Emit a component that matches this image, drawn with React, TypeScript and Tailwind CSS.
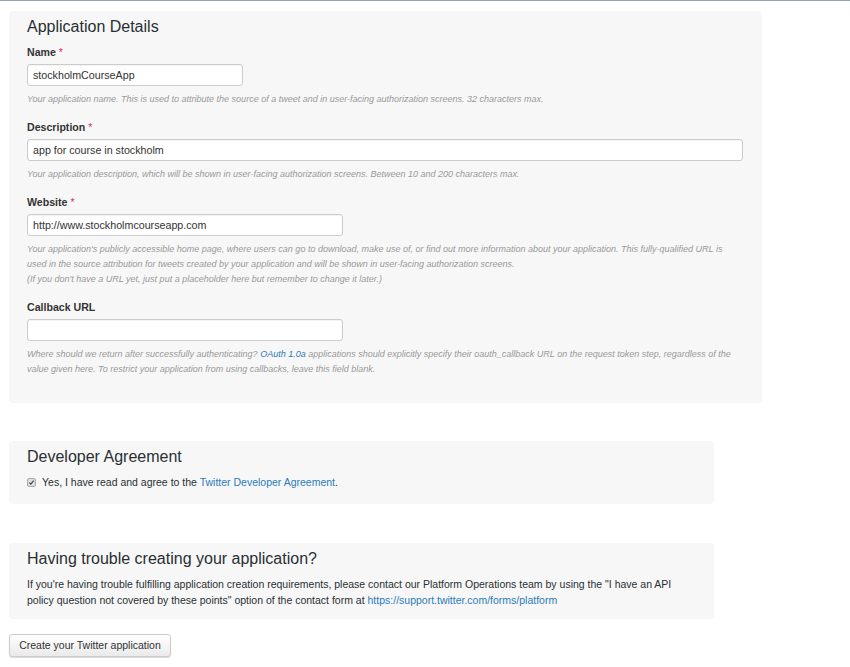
import React from 'react';

const font = { fontFamily: '"Liberation Sans", Arial, sans-serif' };

function Label({ text, required }: { text: string; required?: boolean }) {
  return (
    <div className="text-[10.6px] font-bold text-[#333] leading-[13px]">
      {text}
      {required && <span className="text-[#e0245e] font-normal"> *</span>}
    </div>
  );
}

function Field({
  label,
  required,
  value,
  width,
  children,
}: {
  label: string;
  required?: boolean;
  value: string;
  width: string;
  children: React.ReactNode;
}) {
  return (
    <div className="mb-[14px]">
      <Label text={label} required={required} />
      <input
        readOnly
        value={value}
        className={`mt-[5px] block h-[22px] ${width} rounded-[3px] border border-[#ccc] bg-white px-[5px] text-[10.7px] text-[#333] outline-none shadow-[inset_0_1px_1px_rgba(0,0,0,0.05)]`}
        style={font}
      />
      <div className="mt-[6px] text-[9px] italic leading-[15px] text-[#999]">{children}</div>
    </div>
  );
}

export default function App() {
  return (
    <div className="min-h-[667px] w-[850px] bg-white text-[#333]" style={font}>
      <div className="h-px bg-[#8ba6ba]" />
      <div className="px-[9px] pt-[10px]">
        {/* Application Details */}
        <div className="w-[753px] rounded-[4px] bg-[#f7f7f7] px-[18px] pt-[5px] pb-[12px]">
          <h2 className="text-[16px] leading-[22px] text-[#292f33] mb-[8px]">Application Details</h2>
          <Field label="Name" required value="stockholmCourseApp" width="w-[216px]">
            Your application name. This is used to attribute the source of a tweet and in user-facing authorization screens. 32 characters max.
          </Field>
          <Field label="Description" required value="app for course in stockholm" width="w-[716px]">
            Your application description, which will be shown in user-facing authorization screens. Between 10 and 200 characters max.
          </Field>
          <Field label="Website" required value="http://www.stockholmcourseapp.com" width="w-[316px]">
            Your application's publicly accessible home page, where users can go to download, make use of, or find out more information about your application. This fully-qualified URL is used in the source attribution for tweets created by your application and will be shown in user-facing authorization screens.
            <br />
            (If you don't have a URL yet, just put a placeholder here but remember to change it later.)
          </Field>
          <Field label="Callback URL" value="" width="w-[316px]">
            Where should we return after successfully authenticating? <span className="text-[#2b7bb9]">OAuth 1.0a</span> applications should explicitly specify their oauth_callback URL on the request token step, regardless of the value given here. To restrict your application from using callbacks, leave this field blank.
          </Field>
        </div>

        {/* Developer Agreement */}
        <div className="mt-[38px] w-[705px] rounded-[4px] bg-[#f7f7f7] px-[18px] pt-[5px] pb-[14px]">
          <h2 className="text-[16px] leading-[22px] text-[#292f33] mb-[6px]">Developer Agreement</h2>
          <label className="flex items-center gap-[6px] text-[10.5px] leading-[16px] text-[#292f33]">
            <span className="flex h-[9px] w-[9px] items-center justify-center rounded-[2px] border border-[#aaa] bg-[#ddd]">
              <svg viewBox="0 0 8 8" className="h-[7px] w-[7px]">
                <path d="M1.5 4.2 L3.2 5.8 L6.5 1.8" fill="none" stroke="#444" strokeWidth="1.3" />
              </svg>
            </span>
            <span>
              Yes, I have read and agree to the <span className="text-[#2b7bb9]">Twitter Developer Agreement</span>.
            </span>
          </label>
        </div>

        {/* Trouble */}
        <div className="mt-[39px] w-[705px] rounded-[4px] bg-[#f7f7f7] px-[18px] pt-[5px] pb-[11px]">
          <h2 className="text-[16px] leading-[22px] text-[#292f33] mb-[6px]">Having trouble creating your application?</h2>
          <p className="text-[10.5px] leading-[16px] text-[#292f33]">
            If you're having trouble fulfilling application creation requirements, please contact our Platform Operations team by using the "I have an API policy question not covered by these points" option of the contact form at{' '}
            <span className="text-[#2b7bb9]">https://support.twitter.com/forms/platform</span>
          </p>
        </div>

        <button
          className="mt-[15px] h-[23px] w-[162px] rounded-[3px] border border-[#ccc] bg-gradient-to-b from-white to-[#eaeaea] text-[10.5px] text-[#333] shadow-[0_1px_1px_rgba(0,0,0,0.15)]"
          style={font}
        >
          Create your Twitter application
        </button>
      </div>
    </div>
  );
}
